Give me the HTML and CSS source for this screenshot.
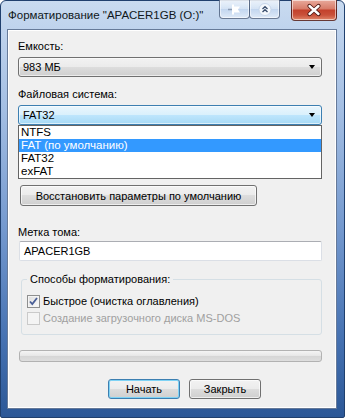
FILE: index.html
```html
<html lang="ru">
<head>
    <meta charset="UTF-8">
    <title>Форматирование</title>
    <link rel="stylesheet" href="styles.css">
</head>
<body>
    <div class="window">
        <div class="titlebar">
            <span class="title">Форматирование "APACER1GB (O:)"</span>
            <div class="caption-buttons">
                <span class="cap-btn">
                    <svg width="28" height="17" viewBox="0 0 28 17">
                        <path d="M7 8.5h4" stroke="#8a9bb3" stroke-width="1.5"/>
                        <rect x="11" y="3.5" width="2" height="10" fill="#fff"/>
                        <path d="M13 5.5h6l-2 3 2 3h-6z" fill="#fff"/>
                    </svg>
                </span>
                <span class="cap-btn">
                    <svg width="28" height="17" viewBox="0 0 28 17">
                        <circle cx="14" cy="8.5" r="6" fill="#f4f8fd" stroke="#c7d6ea"/>
                        <path d="M11.5 8l2.5-2.2 2.5 2.2M11.5 11l2.5-2.2 2.5 2.2" fill="none" stroke="#3b4f6e" stroke-width="1.4"/>
                    </svg>
                </span>
                <span class="cap-btn close">
                    <svg width="44" height="19" viewBox="0 0 44 19">
                        <path d="M17.5 5l9 8M26.5 5l-9 8" stroke="#4a1510" stroke-width="4.2" stroke-linecap="round"/>
                        <path d="M17.5 5l9 8M26.5 5l-9 8" stroke="#fff" stroke-width="2.4" stroke-linecap="round"/>
                    </svg>
                </span>
            </div>
        </div>

        <div class="client">
            <div class="label">Емкость:</div>
            <div class="combo">
                <span>983 МБ</span>
                <span class="arrow"></span>
            </div>

            <div class="label gap">Файловая система:</div>
            <div class="combo-wrap">
                <div class="combo focused">
                    <span>FAT32</span>
                    <span class="arrow"></span>
                </div>
                <!-- открытый список поверх остальных полей -->
                <ul class="dropdown">
                    <li>NTFS</li>
                    <li class="selected">FAT (по умолчанию)</li>
                    <li>FAT32</li>
                    <li>exFAT</li>
                </ul>
            </div>

            <button class="btn restore">Восстановить параметры по умолчанию</button>

            <div class="label volume">Метка тома:</div>
            <div class="textbox">APACER1GB</div>

            <fieldset class="group">
                <legend>Способы форматирования:</legend>
                <div class="check-row">
                    <span class="checkbox checked">
                        <svg width="11" height="11" viewBox="0 0 11 11">
                            <path d="M2 5.5l2.3 2.6L9 2" fill="none" stroke="#4a5f97" stroke-width="1.8"/>
                        </svg>
                    </span>
                    Быстрое (очистка оглавления)
                </div>
                <div class="check-row disabled">
                    <span class="checkbox"></span>
                    Создание загрузочного диска MS-DOS
                </div>
            </fieldset>

            <div class="progress"></div>

            <div class="actions">
                <button class="btn default">Начать</button>
                <button class="btn">Закрыть</button>
            </div>
        </div>
    </div>
</body>
</html>
```

FILE: styles.css
```css
* {
    box-sizing: border-box;
}

body {
    margin: 0;
    font-family: "Liberation Sans", Arial, sans-serif;
    font-size: 11px;
    color: #000;
}

.window {
    width: 345px;
    height: 418px;
    border: 1px solid #20406e;
    border-radius: 6px 6px 2px 2px;
    padding: 0 7px 8px 6px;
    background: linear-gradient(180deg, #c9dbf0 0px, #bfd3ed 28px, #a3bee3 110px, #7398ce 230px, #4571b1 340px, #2b5796 418px);
}

.titlebar {
    height: 28px;
    display: flex;
    justify-content: space-between;
    align-items: flex-start;
}

.title {
    margin: 6px 0 0 1px;
    font-size: 11.5px;
    line-height: 16px;
    white-space: nowrap;
    color: #101820;
}

.caption-buttons {
    display: flex;
    align-items: flex-start;
    margin-top: -1px;
}

.cap-btn {
    width: 31px;
    height: 19px;
    display: flex;
    align-items: center;
    justify-content: center;
    border: 1px solid rgba(40, 60, 95, 0.65);
    border-top: none;
    border-radius: 0 0 4px 4px;
    background: linear-gradient(180deg, rgba(255,255,255,0.65), rgba(230,240,252,0.45) 50%, rgba(190,210,238,0.5) 50%, rgba(235,243,253,0.7));
    box-shadow: inset 0 0 0 1px rgba(255, 255, 255, 0.55);
}

.cap-btn + .cap-btn {
    margin-left: -1px;
}

.cap-btn.close {
    width: 46px;
    height: 21px;
    margin-left: 11px;
    border-color: rgba(60, 20, 20, 0.75);
    background: linear-gradient(180deg, #e8aa9c, #d77b68 45%, #c3412c 50%, #c9513a 75%, #e0866a);
}

.client {
    height: 380px;
    border: 1px solid #667a99;
    box-shadow: inset 0 0 0 1px #fff;
    background: #f0f0f0;
    padding: 9px 14px 0 10px;
}

.label {
    line-height: 15px;
}

.label.gap {
    margin-top: 10px;
}

.label.volume {
    margin-top: 19px;
}

.combo {
    height: 20px;
    margin-top: 3px;
    display: flex;
    align-items: center;
    justify-content: space-between;
    padding: 0 6px 0 4px;
    border: 1px solid #707070;
    border-radius: 3px;
    background: linear-gradient(180deg, #f2f2f2, #ebebeb 50%, #dddddd 50%, #cfcfcf);
    box-shadow: inset 0 0 0 1px rgba(255, 255, 255, 0.6);
}

.combo.focused {
    margin-top: 0;
    border-color: #3c7fb1;
    background: linear-gradient(180deg, #eaf6fd, #d9f0fc 50%, #bee6fd 50%, #a7d9f5);
}

.arrow {
    width: 0;
    height: 0;
    border-left: 3.5px solid transparent;
    border-right: 3.5px solid transparent;
    border-top: 4px solid #000;
}

.combo-wrap {
    position: relative;
    margin-top: 3px;
}

.dropdown {
    position: absolute;
    top: 100%;
    left: 0;
    right: 0;
    margin: 0;
    padding: 0;
    list-style: none;
    background: #fff;
    border: 1px solid #646464;
    font-size: 11.5px;
}

.dropdown li {
    height: 13px;
    line-height: 13px;
    padding-left: 2px;
}

.dropdown li.selected {
    background: #3399ff;
    color: #fff;
}

.btn {
    font-family: "Liberation Sans", Arial, sans-serif;
    font-size: 11px;
    color: #000;
    height: 21px;
    padding: 0;
    border: 1px solid #707070;
    border-radius: 3px;
    background: linear-gradient(180deg, #f2f2f2, #ebebeb 50%, #dddddd 50%, #cfcfcf);
    box-shadow: inset 0 0 0 1px rgba(255, 255, 255, 0.65);
}

/* место под скрытую строку «размер кластера» */
.btn.restore {
    display: block;
    width: 237px;
    margin: 60px 0 0 2px;
}

.textbox {
    height: 20px;
    margin-top: 1px;
    margin-left: 1px;
    line-height: 18px;
    padding-left: 4px;
    background: #fff;
    border: 1px solid #dbdfe6;
    border-top-color: #abadb3;
    border-radius: 2px;
}

.group {
    margin: 11px 0 0 3px;
    padding: 7px 4px 8px 4px;
    border: 1px solid #d5dfe5;
    border-radius: 3px;
}

.group legend {
    padding: 0 3px;
    margin-left: 1px;
    line-height: 15px;
}

.check-row {
    display: flex;
    align-items: center;
    line-height: 15px;
}

.check-row + .check-row {
    margin-top: 2px;
}

.check-row.disabled {
    color: #a0a0a0;
}

.checkbox {
    width: 13px;
    height: 13px;
    margin: 0 3px 0 1px;
    display: flex;
    align-items: center;
    justify-content: center;
    border: 1px solid #8e8f8f;
    background: linear-gradient(135deg, #dcdcdc, #fdfdfd);
    box-shadow: inset 0 0 0 1px #f4f4f4;
}

.check-row.disabled .checkbox {
    border-color: #cacaca;
    background: #f4f4f4;
}

.progress {
    height: 12px;
    margin: 15px 0 0 1px;
    border: 1px solid #b2b2b2;
    border-radius: 3px;
    background: linear-gradient(180deg, #f4f4f4, #e6e6e6 50%, #d6d6d6 55%, #dedede);
}

.actions {
    display: flex;
    gap: 9px;
    margin: 17px 0 0 90px;
}

.actions .btn {
    width: 72px;
    height: 20px;
}

.btn.default {
    border-color: #3c7fb1;
    box-shadow: inset 0 0 0 1px #7fd3f5;
}
```
